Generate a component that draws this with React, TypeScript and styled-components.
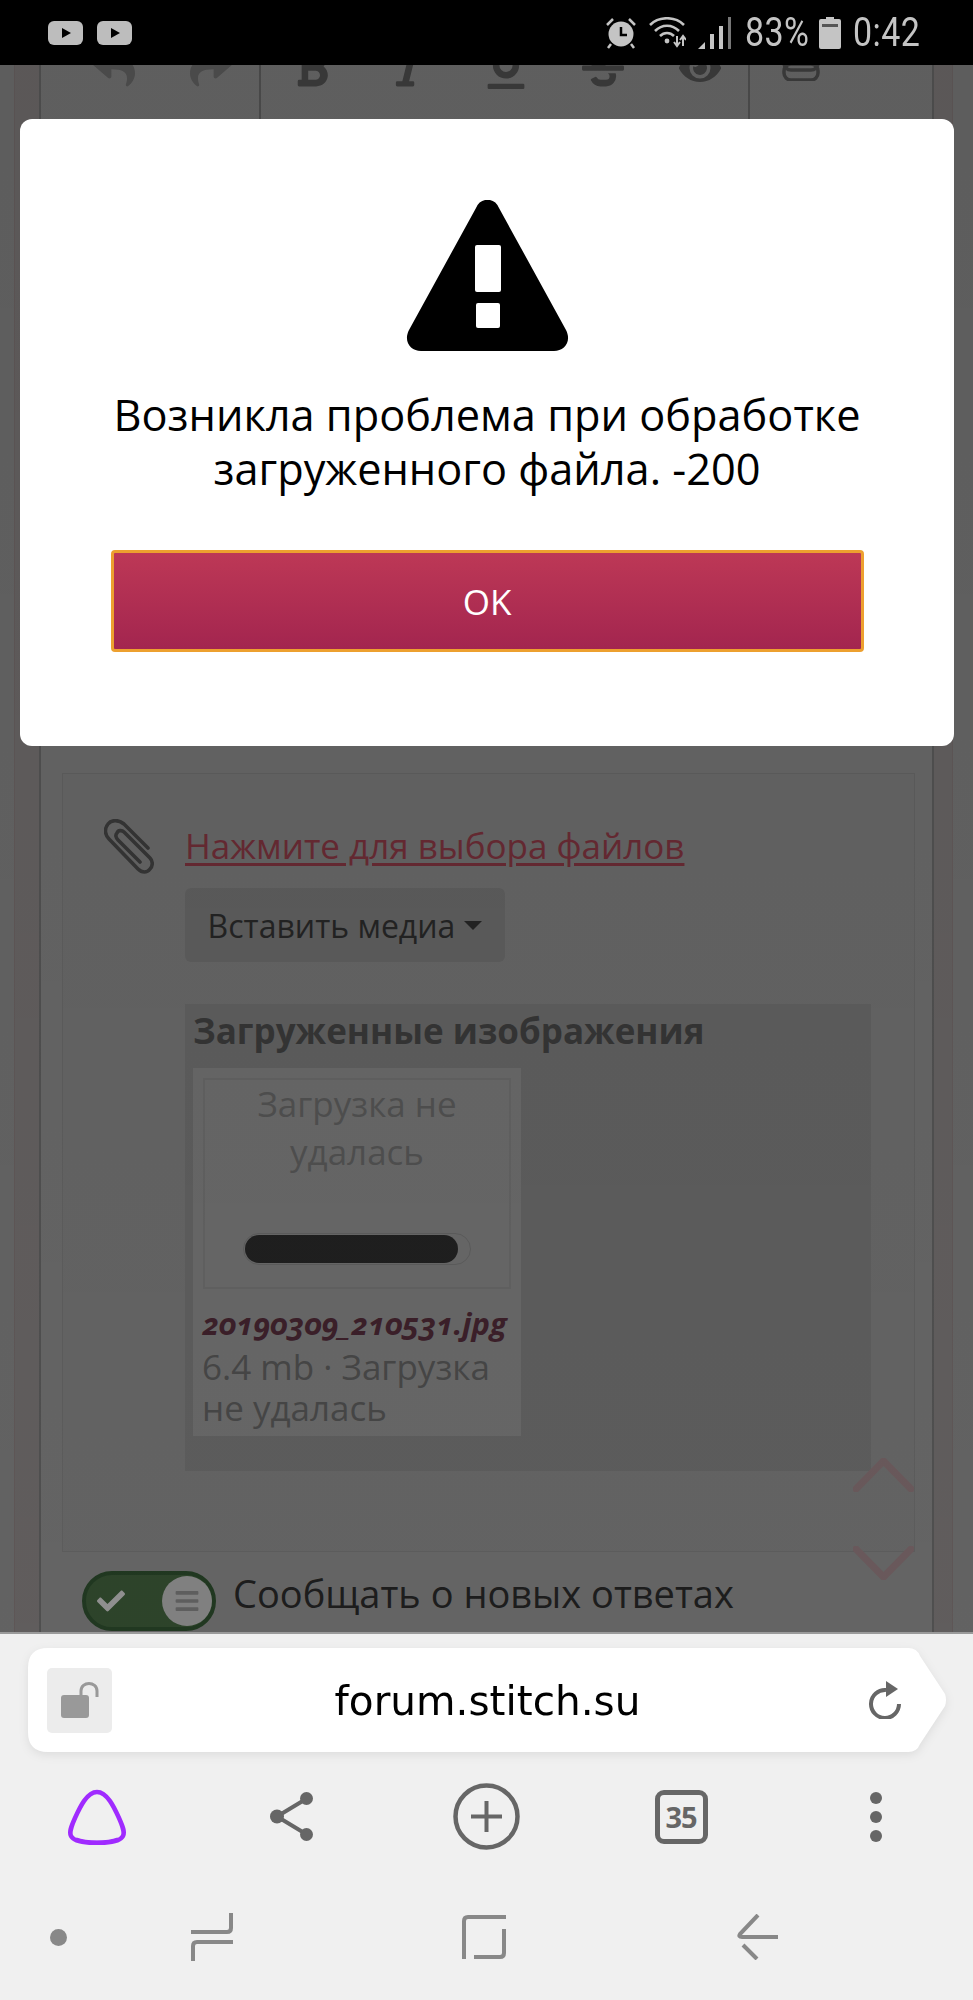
import React from 'react';
import styled, { createGlobalStyle } from 'styled-components';
import { FaBars, FaBold, FaCheck, FaEye, FaItalic, FaReply, FaShare, FaStrikethrough, FaUnderline } from 'react-icons/fa';

const GlobalStyle = createGlobalStyle`
  html, body {
    margin: 0;
    padding: 0;
    background: #f0f0f0;
    font-family: "Open Sans", "Liberation Sans", sans-serif;
  }
  * { box-sizing: border-box; }
`;

const Phone = styled.div`
  width: 973px;
  height: 2000px;
  display: flex;
  flex-direction: column;
  overflow: hidden;
`;

/* status bar */
const StatusBar = styled.div`
  height: 65px;
  flex: none;
  background: #000;
  display: flex;
  align-items: center;
  padding: 0 54px 0 48px;
  color: #c4c4c4;
`;

const StatusLeft = styled.div`
  display: flex;
  gap: 14px;
`;

const StatusRight = styled.div`
  margin-left: auto;
  display: flex;
  align-items: center;
  gap: 12px;
`;

const StatusText = styled.span<{ $w: number }>`
  display: block;
  width: ${(p) => p.$w}px;
  font-family: Roboto, sans-serif;
  font-size: 40px;
  line-height: 48px;
  letter-spacing: 0.5px;
  white-space: nowrap;
  transform: scaleX(0.85);
  transform-origin: left center;
`;

/* page behind the dialog */
const Viewport = styled.div`
  height: 1567px;
  flex: none;
  position: relative;
  overflow: hidden;
  background: #afafaf;
`;

// the page is scrolled, so the toolbar's negative margin pulls this up
const Shell = styled.div`
  margin: 0 20px 0 14px;
  padding: 0 18px 0 24px;
  height: calc(100% + 18px);
  background: #aba5a5;
  border-left: 1px solid #a89a9a;
  border-right: 1px solid #a89a9a;
`;

const Editor = styled.div`
  height: 100%;
  background: #b2b2b2;
  border-left: 2px solid #8d8d8d;
  border-right: 2px solid #8d8d8d;
`;

const Toolbar = styled.div`
  margin-top: -18px;
  height: 93px;
  display: flex;
`;

const ToolGroup = styled.div<{ $first?: boolean; $divider?: boolean }>`
  display: flex;
  padding-left: ${(p) => (p.$first ? 24 : 2)}px;
  border-right: ${(p) => (p.$divider ? '2px solid #878787' : 'none')};
`;

const ToolButton = styled.div<{ $muted?: boolean }>`
  width: 97px;
  display: flex;
  justify-content: center;
  color: ${(p) => (p.$muted ? '#8b8b8b' : '#696969')};
  font-size: 42px;
`;

const EditorBody = styled.div`
  height: 633px;
`;

const Fieldset = styled.div`
  margin: 0 17px 0 21px;
  height: 779px;
  padding: 45px 0 0 41px;
  background: #b0b0b0;
  border: 1px solid #a4a4a4;
  display: flex;
`;

const ClipColumn = styled.div`
  width: 81px;
  flex: none;
`;

const UploadColumn = styled.div`
  width: 686px;
  padding-top: 5px;
`;

const UploadLink = styled.div`
  font-size: 35px;
  line-height: 44px;
  color: #b54a59;
  text-decoration: underline;
  text-underline-offset: 4px;
  white-space: nowrap;
`;

const MediaButton = styled.div`
  margin-top: 20px;
  width: 320px;
  height: 74px;
  border-radius: 6px;
  background: #a2a2a2;
  color: #3e3e3e;
  font-size: 32px;
  display: flex;
  align-items: center;
  justify-content: center;
  gap: 9px;
`;

const Caret = styled.span`
  width: 0;
  height: 0;
  border-left: 9px solid transparent;
  border-right: 9px solid transparent;
  border-top: 9px solid #3e3e3e;
`;

const ImagesPanel = styled.div`
  margin-top: 42px;
  height: 467px;
  padding: 5px 0 0 8px;
  background: #a4a4a4;
`;

const PanelTitle = styled.div`
  font-size: 35px;
  line-height: 44px;
  font-weight: 700;
  color: #5d5d5d;
  margin-bottom: 15px;
  white-space: nowrap;
`;

const ImageCard = styled.div`
  width: 328px;
  height: 368px;
  padding: 10px;
  background: #b6b6b6;
`;

const ThumbBox = styled.div`
  height: 211px;
  border: 2px solid #ababab;
  text-align: center;
  color: #8c8c8c;
  font-size: 35px;
  line-height: 48px;
`;

const ProgressTrack = styled.div`
  width: 228px;
  height: 32px;
  margin: 57px auto 0;
  padding: 1px;
  border: 1px solid #a2a2a2;
  border-radius: 16px;
`;

const ProgressFill = styled.div`
  height: 100%;
  border-radius: 14px;
  background: #373737;
`;

const FileName = styled.div`
  margin-top: 14px;
  margin-left: -1px;
  font-size: 31px;
  line-height: 40px;
  font-weight: 700;
  font-style: italic;
  font-variant-numeric: oldstyle-nums;
  color: #693849;
  white-space: nowrap;
`;

const FileMeta = styled.div`
  margin-top: 3px;
  margin-left: -1px;
  font-size: 35px;
  line-height: 41px;
  color: #7c7c7c;
`;

const NotifyRow = styled.div`
  margin: 19px 0 0 41px;
  display: flex;
  align-items: flex-start;
  gap: 17px;
  color: #333;
  font-size: 38px;
`;

const NotifyLabel = styled.span`
  line-height: 44px;
  white-space: nowrap;
`;

const Toggle = styled.div`
  width: 134px;
  height: 60px;
  flex: none;
  border-radius: 30px;
  background: #50784b;
  border: 4px solid #3a633a;
  display: flex;
  align-items: center;
  justify-content: space-between;
  padding: 0 0 0 11px;
  color: #fff;
  font-size: 28px;
`;

const ToggleKnob = styled.div`
  width: 50px;
  height: 50px;
  border-radius: 50%;
  background: #e4e4e4;
  color: #a7a7a7;
  display: flex;
  align-items: center;
  justify-content: center;
  font-size: 26px;
`;

const Chevron = styled.svg<{ $top: number }>`
  position: absolute;
  left: 853px;
  top: ${(p) => p.$top}px;
  width: 61px;
  height: 34px;
  fill: none;
  stroke: #bb9ea2;
  stroke-width: 7;
  stroke-linecap: round;
  stroke-linejoin: round;
`;

/* dialog */
const Overlay = styled.div`
  position: absolute;
  inset: 0;
  background: linear-gradient(rgba(0, 0, 0, 0.47), rgba(0, 0, 0, 0.44));
`;

const Dialog = styled.div`
  position: absolute;
  left: 20px;
  top: 54px;
  width: 934px;
  height: 627px;
  padding-top: 81px;
  border-radius: 12px;
  background: #fff;
  display: flex;
  flex-direction: column;
  align-items: center;
`;

const DialogText = styled.div`
  margin-top: 37px;
  font-size: 43.3px;
  line-height: 54px;
  color: #000;
  text-align: center;
  white-space: nowrap;
`;

const OkButton = styled.div`
  margin-top: 54px;
  width: 753px;
  height: 102px;
  border: 3px solid #eda02f;
  border-radius: 4px;
  background: linear-gradient(#bd3856, #a3254f);
  color: #fff;
  font-size: 35px;
  display: flex;
  align-items: center;
  justify-content: center;
`;

/* browser chrome */
const BrowserBar = styled.div`
  flex: 1;
  background: #f0f0f0;
  border-top: 2px solid #9a9a9a;
`;

const UrlShadow = styled.div`
  margin: 14px 0 0 28px;
  width: 918px;
  filter: drop-shadow(0 3px 5px rgba(0, 0, 0, 0.08));
`;

const UrlPill = styled.div`
  height: 104px;
  padding: 0 45px 0 19px;
  background: #fff;
  clip-path: path('M20 0 H880 Q889 0 892 8 L917 46 Q919 52 917 58 L892 96 Q889 104 880 104 H20 Q0 104 0 84 V20 Q0 0 20 0 Z');
  display: flex;
  align-items: center;
`;

const LockBox = styled.div`
  width: 65px;
  height: 65px;
  flex: none;
  border-radius: 5px;
  background: #ececec;
  display: flex;
  align-items: center;
  justify-content: center;
`;

const UrlText = styled.div`
  flex: 1;
  padding: 2px 6px 0 0;
  text-align: center;
  font-family: "DejaVu Sans", sans-serif;
  font-size: 40.6px;
  color: #000;
`;

const ActionRow = styled.div`
  margin-top: 31px;
  height: 67px;
  display: grid;
  grid-template-columns: repeat(5, 1fr);
  align-items: center;
  justify-items: center;
`;

const TabCounter = styled.div`
  width: 53px;
  height: 54px;
  border: 5px solid #666;
  border-radius: 9px;
  color: #666;
  font-size: 29px;
  font-weight: 700;
  letter-spacing: -1px;
  display: flex;
  align-items: center;
  justify-content: center;
`;

const MenuDots = styled.div`
  display: flex;
  flex-direction: column;
  gap: 7px;
`;

const MenuDot = styled.span`
  width: 12px;
  height: 12px;
  border-radius: 50%;
  background: #666;
`;

const NavRow = styled.div`
  margin-top: 63px;
  height: 48px;
  display: grid;
  grid-template-columns: 116px 192px 352px 194px;
  align-items: center;
  justify-items: center;
`;

const NavDot = styled.span`
  width: 17px;
  height: 17px;
  border-radius: 50%;
  background: #888;
`;

const NavIcon = styled.svg`
  fill: none;
  stroke: #888;
  stroke-width: 4;
`;

const YoutubeIcon = () => (
  <svg width="35" height="24" viewBox="0 0 35 24">
    <rect width="35" height="24" rx="6" fill="#bdbdbd" />
    <path d="M14 7 L23 12 L14 17 Z" fill="#000" />
  </svg>
);

const AlarmIcon = () => (
  <svg width="32" height="32" viewBox="0 0 32 32" fill="#c4c4c4">
    <circle cx="16" cy="17" r="12.5" />
    <path d="M16 10 V18 H22" fill="none" stroke="#000" strokeWidth="2.5" />
    <path d="M2 8 L8 2 M30 8 L24 2 M6 27 L3 31 M26 27 L29 31" stroke="#c4c4c4" strokeWidth="2.5" />
  </svg>
);

const WifiIcon = () => (
  <svg width="37" height="32" viewBox="0 0 37 32" fill="none" stroke="#c4c4c4" strokeWidth="2.6">
    <path d="M1 8 C10 -1 26 -1 35 8" />
    <path d="M6 14 C13 7 23 7 30 14" />
    <path d="M11 19 C15 15 21 15 25 19" />
    <circle cx="18" cy="24" r="2.4" fill="#c4c4c4" stroke="none" />
    <path d="M28 19 V29 M25 25 L28 29 L31 25" strokeWidth="2" />
    <path d="M34 29 V19 M31 23 L34 19 L37 23" strokeWidth="2" />
  </svg>
);

const SignalIcon = () => (
  <svg width="35" height="32" viewBox="0 0 35 32" fill="#c4c4c4">
    <path d="M0 32 L7 25 V32 Z" />
    <rect x="12" y="17" width="4" height="15" />
    <rect x="21" y="9" width="4" height="23" />
    <rect x="30" y="0" width="3" height="32" fill="#777" />
  </svg>
);

const BatteryIcon = () => (
  <svg width="22" height="32" viewBox="0 0 22 32" fill="#c4c4c4">
    <path d="M7 0 H15 V2 H20 Q22 2 22 4 V30 Q22 32 20 32 H2 Q0 32 0 30 V4 Q0 2 2 2 H7 Z" />
    <rect x="3" y="7" width="16" height="3" fill="#555" />
  </svg>
);

const ChainIcon = () => (
  <svg width="38" height="34" viewBox="0 0 38 34" fill="none" stroke="#696969" strokeWidth="3.5">
    <rect x="2" y="7" width="34" height="16" rx="7" />
    <rect x="2" y="17" width="34" height="16" rx="7" />
  </svg>
);

const WarningIcon = () => (
  <svg width="163" height="151" viewBox="0 0 163 151">
    <path d="M70 8 C74 -3 89 -3 93 8 L160 130 C166 142 158 151 148 151 L15 151 C5 151 -3 142 3 130 Z" fill="#000" />
    <rect x="69" y="45" width="26" height="47" rx="2" fill="#fff" />
    <rect x="70" y="103" width="24" height="25" rx="2" fill="#fff" />
  </svg>
);

const PaperclipIcon = () => (
  <svg width="50" height="55" viewBox="0 0 50 55" fill="none" stroke="#5d5d5d" strokeWidth="3.6" strokeLinecap="round">
    <path d="M44 29 L20 5 C14 0 7 1 4 5 C0 10 1 16 5 20 L34 50 C38 54 43 54 46 50 C49 47 49 42 46 39 L20 13 C18 11 14 11 13 14 C11 16 12 19 14 21 L36 43" />
  </svg>
);

const LockIcon = () => (
  <svg width="38" height="36" viewBox="0 0 38 36">
    <rect x="0" y="13" width="28" height="23" rx="3" fill="#999" />
    <path d="M20 13 V9 C20 -1 36 -1 36 9 V15" fill="none" stroke="#999" strokeWidth="3" />
  </svg>
);

const ReloadIcon = () => (
  <svg width="32" height="38" viewBox="0 0 32 38" fill="none" stroke="#666" strokeWidth="4">
    <path d="M17 9 A14 14 0 1 0 30 23" />
    <path d="M17 0 L29 8 L17 16 Z" fill="#666" stroke="none" />
  </svg>
);

const AliceIcon = () => (
  <svg width="60" height="56" viewBox="0 0 60 56" fill="none" stroke="#a02bff" strokeWidth="4.5">
    <path d="M30 3 C40 3 47 18 52 29 C56 38 58 43 56 47 C53 53 42 54 30 54 C18 54 7 53 4 47 C2 43 4 38 8 29 C13 18 20 3 30 3 Z" />
    <path d="M9 50 C20 54 40 54 51 50" strokeWidth="3" />
  </svg>
);

const ShareIcon = () => (
  <svg width="43" height="49" viewBox="0 0 43 49" fill="#666" stroke="#666">
    <path d="M36 7 L7 24.500 L36 42" fill="none" strokeWidth="4" />
    <circle cx="36.500" cy="6.500" r="6.500" stroke="none" />
    <circle cx="36.500" cy="42.500" r="6.500" stroke="none" />
    <circle cx="7" cy="24.500" r="7" stroke="none" />
  </svg>
);

const PlusCircleIcon = () => (
  <svg width="67" height="67" viewBox="0 0 67 67" fill="none" stroke="#666">
    <circle cx="33.500" cy="33.500" r="31" strokeWidth="4.500" />
    <path d="M33.500 18 V49 M18 33.500 H49" strokeWidth="4" />
  </svg>
);

const App = () => {
  return (
    <Phone>
      <GlobalStyle />
      <StatusBar>
        <StatusLeft>
          <YoutubeIcon />
          <YoutubeIcon />
        </StatusLeft>
        <StatusRight>
          <AlarmIcon />
          <WifiIcon />
          <SignalIcon />
          <StatusText $w={62}>83%</StatusText>
          <BatteryIcon />
          <StatusText $w={66}>0:42</StatusText>
        </StatusRight>
      </StatusBar>

      <Viewport>
        <Shell>
          <Editor>
            <Toolbar>
              <ToolGroup $first $divider>
                <ToolButton $muted><FaReply /></ToolButton>
                <ToolButton $muted><FaShare /></ToolButton>
              </ToolGroup>
              <ToolGroup $divider>
                <ToolButton><FaBold /></ToolButton>
                <ToolButton><FaItalic /></ToolButton>
                <ToolButton><FaUnderline /></ToolButton>
                <ToolButton><FaStrikethrough /></ToolButton>
                <ToolButton><FaEye /></ToolButton>
              </ToolGroup>
              <ToolGroup>
                <ToolButton><ChainIcon /></ToolButton>
              </ToolGroup>
            </Toolbar>
            <EditorBody />
            <Fieldset>
              <ClipColumn>
                <PaperclipIcon />
              </ClipColumn>
              <UploadColumn>
                <UploadLink>Нажмите для выбора файлов</UploadLink>
                <MediaButton>
                  Вставить медиа
                  <Caret />
                </MediaButton>
                <ImagesPanel>
                  <PanelTitle>Загруженные изображения</PanelTitle>
                  <ImageCard>
                    <ThumbBox>
                      Загрузка не
                      <br />
                      удалась
                      <ProgressTrack>
                        <ProgressFill style={{ width: '95%' }} />
                      </ProgressTrack>
                    </ThumbBox>
                    <FileName>20190309_210531.jpg</FileName>
                    <FileMeta>6.4 mb · Загрузка не удалась</FileMeta>
                  </ImageCard>
                </ImagesPanel>
              </UploadColumn>
            </Fieldset>
            <NotifyRow>
              <Toggle>
                <FaCheck />
                <ToggleKnob>
                  <FaBars />
                </ToggleKnob>
              </Toggle>
              <NotifyLabel>Сообщать о новых ответах</NotifyLabel>
            </NotifyRow>
          </Editor>
        </Shell>

        <Chevron $top={1393} viewBox="0 0 61 34">
          <path d="M3 31 L30.500 3 L58 31" />
        </Chevron>
        <Chevron $top={1481} viewBox="0 0 61 34">
          <path d="M3 3 L30.500 31 L58 3" />
        </Chevron>

        <Overlay />

        <Dialog>
          <WarningIcon />
          <DialogText>
            Возникла проблема при обработке
            <br />
            загруженного файла. -200
          </DialogText>
          <OkButton>OK</OkButton>
        </Dialog>
      </Viewport>

      <BrowserBar>
        <UrlShadow>
          <UrlPill>
            <LockBox>
              <LockIcon />
            </LockBox>
            <UrlText>forum.stitch.su</UrlText>
            <ReloadIcon />
          </UrlPill>
        </UrlShadow>
        <ActionRow>
          <AliceIcon />
          <ShareIcon />
          <PlusCircleIcon />
          <TabCounter>35</TabCounter>
          <MenuDots>
            <MenuDot />
            <MenuDot />
            <MenuDot />
          </MenuDots>
        </ActionRow>
        <NavRow>
          <NavDot />
          <NavIcon width="42" height="48" viewBox="0 0 42 48">
            <path d="M40 0 V15 Q40 19 36 19 H0" />
            <path d="M42 29 H6 Q2 29 2 33 V48" />
          </NavIcon>
          <NavIcon width="44" height="44" viewBox="0 0 44 44">
            <path d="M2 44 V6 Q2 2 6 2 H44" />
            <path d="M42 14 V38 Q42 42 38 42 H12" />
          </NavIcon>
          <NavIcon width="41" height="46" viewBox="0 0 41 46">
            <path d="M21 1 L3 20 Q1 23 5 23 H41" />
            <path d="M6 31 L20 45" />
          </NavIcon>
        </NavRow>
      </BrowserBar>
    </Phone>
  );
};

export default App;
